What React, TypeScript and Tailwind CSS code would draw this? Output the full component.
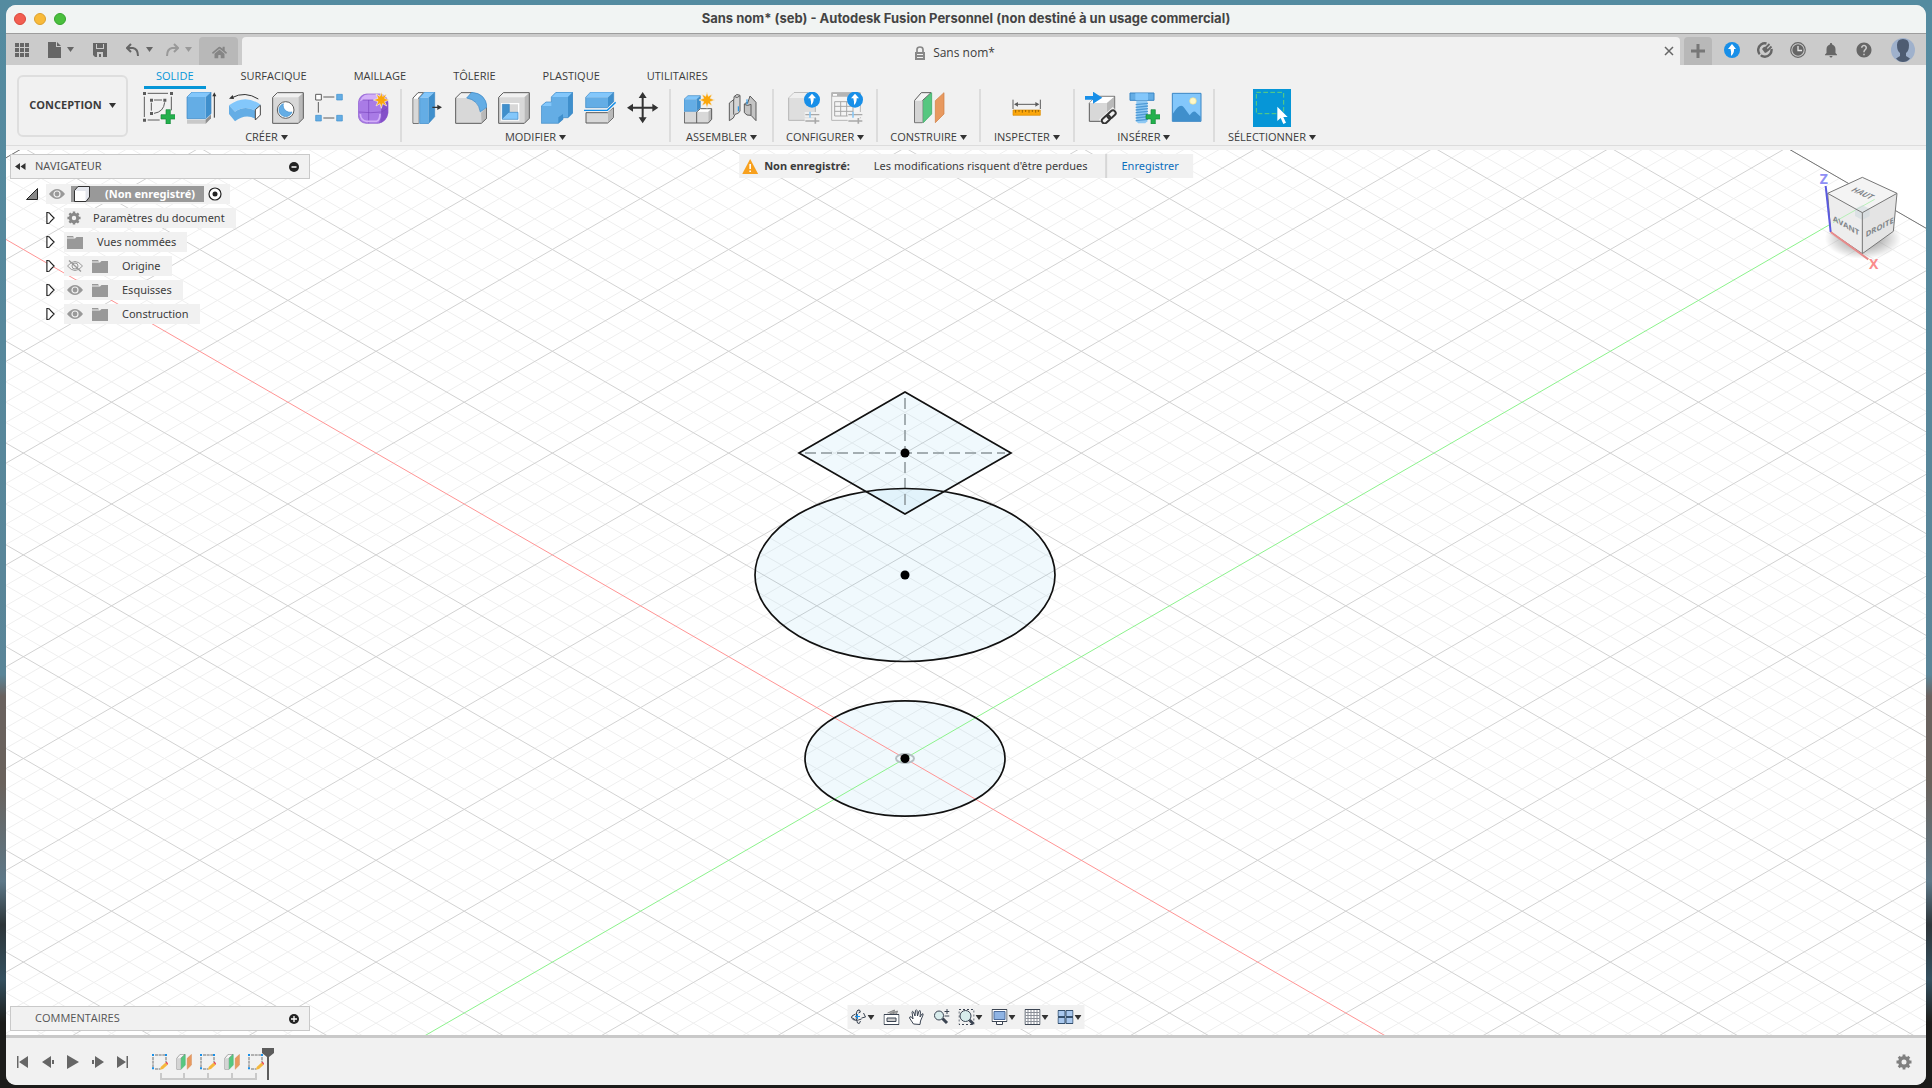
import React from 'react';
import { FaHome } from 'react-icons/fa';
import { MdNotifications, MdHelp } from 'react-icons/md';

const BLUE = '#64ade5';
const BLUE_LIGHT = '#83c7fb';
const BLUE_DARK = '#3f8fcc';
const LINE = '#5c5c5c';

interface IconProps {
  children: React.ReactNode;
  className?: string;
}

const Icon: React.FC<IconProps> = ({ children, className = 'size-8' }) => (
  <svg viewBox="0 0 96 96" className={`${className} shrink-0`} fill="none" aria-hidden="true">
    {children}
  </svg>
);

const Caret: React.FC<{ className?: string }> = ({ className = 'text-[#333]' }) => (
  <svg viewBox="0 0 7 5" className={`h-[5px] w-[7px] shrink-0 ${className}`} aria-hidden="true">
    <path d="M0 0h7L3.5 5z" fill="currentColor" />
  </svg>
);

const Gear: React.FC<{ className: string }> = ({ className }) => (
  <svg viewBox="0 0 16 16" className={`${className} shrink-0`} fill="none" stroke="currentColor" aria-hidden="true">
    <circle cx="8" cy="8" r="4.200" strokeWidth="3.400" />
    <path d="M8 .5V3M8 13v2.500M.5 8H3M13 8h2.500M2.700 2.700l1.800 1.800M11.500 11.500l1.800 1.800M2.700 13.300l1.800-1.800M11.500 4.500l1.800-1.800" strokeWidth="2.800" />
  </svg>
);

const Star: React.FC<{ x: number; y: number }> = ({ x, y }) => (
  <path
    transform={`translate(${x} ${y})`}
    d="M0-25 4-11 16-18 10-5 24 0 10 5 16 18 4 11 0 25-4 11-16 18-10 5-24 0-10-5-16-18-4-11z"
    fill="#fba60a"
    stroke="#f1f1f1"
    strokeWidth="2"
  />
);

const Plus: React.FC = () => (
  <path d="M69 53h13v15h15v13H82v15H69V81H54V68h15z" fill="#23b14d" stroke="#15873a" strokeWidth="2" />
);

const Badge: React.FC = () => (
  <>
    <circle cx="72" cy="23" r="24" fill="#188fe8" />
    <path d="M72 5 84 19H77Q78 32 69 39 70 30 67 19H60z" fill="#fff" />
  </>
);

const Sliders: React.FC = () => (
  <g strokeWidth="4">
    <path d="M50 68H94M50 87H94" stroke="#f1f1f1" strokeWidth="16" />
    <path d="M52 68H94M52 87H94" stroke="#a8a8a8" />
    <path d="M66 59V77" stroke="#8cc8f5" strokeWidth="5" />
    <path d="M82 78V95" stroke="#a8a8a8" strokeWidth="5" />
  </g>
);

const Cube: React.FC = () => (
  <g stroke={LINE} strokeWidth="3" strokeLinejoin="round">
    <path d="M2 16 16 2H94L79 16z" fill="#f1f1f1" stroke="none" />
    <path d="M79 16 94 2V79L79 94z" fill="#b9b9b9" stroke="none" />
    <path d="M2 16H79V94H2z" fill="#d8d8d8" stroke="none" />
    <path d="M2 16 16 2H94V79L79 94H2z" />
  </g>
);

const ConstructPlanes: React.FC<{ className?: string }> = ({ className }) => (
  <Icon className={className}>
    <path d="M5 25 25 2H54L28 26V92H5z" fill="#f4f4f4" stroke={LINE} strokeWidth="3" />
    <path d="M6 26H29V91H6z" fill="#d4d4d4" />
    <path d="M31 26 56 2V66L31 92z" fill="#56c780" stroke="#2fa45c" strokeWidth="2" />
    <path d="M67 26 93 2V66L67 92z" fill="#e8995f" stroke="#cf7b40" strokeWidth="2" />
  </Icon>
);

const createIcons: Record<string, React.ReactNode> = {
  'Créer une esquisse': (
    <Icon>
      <g stroke={LINE} strokeWidth="3">
        <path d="M14 4H75M4 14V75M14 84H50M85 14V55M33 24H57M25 32V56" />
        <path d="M65 31Q62 60 33 64" />
      </g>
      <path d="M0 0h9v9H0zM81 0h9v9h-9zM0 80h9v9H0zM21 20h9v9h-9zM61 20h9v9h-9zM21 60h9v9h-9z" fill={LINE} />
      <Plus />
    </Icon>
  ),
  Extrusion: (
    <Icon>
      <path d="M3 83H59L75 68V79L59 95H3z" fill="#c9c9c9" />
      <path d="M59 83 75 68V79L59 95z" fill="#8f8f8f" />
      <path d="M3 15 18 0H75L59 15z" fill={BLUE_LIGHT} />
      <path d="M59 15 75 0V65L59 80z" fill={BLUE_DARK} />
      <path d="M3 15H59V80H3z" fill={BLUE} />
      <path d="M3 15 18 0H75V65L59 80H3z" stroke="#3b86c4" strokeWidth="2" />
      <path d="M85 10V77" stroke="#333" strokeWidth="3" />
      <path d="M85 1 91 13H79z" fill="#333" />
    </Icon>
  ),
  Révolution: (
    <Icon>
      <path d="M9 17Q48-4 88 21" stroke="#333" strokeWidth="3" />
      <path d="M0 20 11 9 15 21z" fill="#333" />
      <path d="M0 40Q48 5 95 38L79 56Q48 38 18 59z" fill={BLUE_LIGHT} />
      <path d="M0 40 18 59Q48 38 79 56V80Q48 64 18 88L0 66z" fill={BLUE} />
      <path d="M79 53 94 40V69L79 84z" fill="#fff" stroke="#444" strokeWidth="3" />
    </Icon>
  ),
  Perçage: (
    <Icon>
      <Cube />
      <circle cx="41" cy="54" r="25" fill="#fff" stroke={LINE} strokeWidth="3" />
      <path d="M34 35A20 20 0 1 0 60 60 21 21 0 0 1 34 35z" fill={BLUE} stroke={BLUE_DARK} strokeWidth="2" />
    </Icon>
  ),
  Réseau: (
    <Icon>
      <path d="M25 15H58M10 30V62M25 78H58" stroke={LINE} strokeWidth="3" />
      <path d="M2 7h17v17H2z" fill="#fff" stroke={LINE} strokeWidth="3" />
      <path d="M65 7h17v17H65zM2 70h17v17H2zM65 70h17v17H65z" fill={BLUE} stroke={BLUE_DARK} strokeWidth="2" />
    </Icon>
  ),
  Forme: (
    <Icon>
      <path d="M1 32Q4 8 26 6H66Q90 12 90 34V62Q86 90 60 94H24Q2 92 1 70z" fill="#a97be6" />
      <path d="M12 16Q20 7 30 6H66L58 24H14Q5 26 2 34z" fill="#d3b0f8" />
      <path d="M71 36 90 26V64Q84 88 66 93 73 80 71 36z" fill="#8450c9" />
      <path d="M32 24V94M2 60Q40 64 70 60L90 48M14 24H58Q72 28 71 60 70 84 64 94" stroke="#7a45bd" strokeWidth="2" />
      <path d="M7 66Q8 86 26 88H56Q66 84 66 66" stroke="#d3b0f8" strokeWidth="5" />
      <path d="M1 32Q4 8 26 6H66Q90 12 90 34V62Q86 90 60 94H24Q2 92 1 70z" stroke="#8a55cc" strokeWidth="2" />
      <Star x={70} y={24} />
    </Icon>
  ),
};

const modifyIcons: Record<string, React.ReactNode> = {
  'Appuyer/Tirer': (
    <Icon>
      <path d="M3 94V18L18 2H35L20 18V94z" fill="#fff" stroke={LINE} strokeWidth="3" />
      <path d="M5 20H20V93H5z" fill="#d8d8d8" />
      <path d="M23 17 38 0H68L49 17z" fill={BLUE_LIGHT} />
      <path d="M49 17 68 0V74L49 95z" fill={BLUE_DARK} />
      <path d="M23 17H49V95H23z" fill={BLUE} />
      <path d="M23 17 38 0H68V74L49 95H23z" stroke="#3b86c4" strokeWidth="2" />
      <path d="M61 46H78" stroke="#333" strokeWidth="4" />
      <path d="M90 46 76 38V54z" fill="#333" />
    </Icon>
  ),
  Congé: (
    <Icon>
      <path d="M2 94V18L18 2H52L36 18Q70 24 76 60L94 46V79L79 94z" fill="#f1f1f1" />
      <path d="M2 94V18H34Q72 24 78 66V94z" fill="#d8d8d8" />
      <path d="M78 62 95 45V79L79 94z" fill="#b9b9b9" />
      <path d="M52 2H18L2 18V94H79L95 79V46" stroke={LINE} strokeWidth="3" />
      <path d="M35 18 50 1Q92 4 96 45L76 60Q70 24 35 18z" fill={BLUE} stroke="#3b86c4" strokeWidth="2" />
    </Icon>
  ),
  Coque: (
    <Icon>
      <Cube />
      <path d="M9 33H64V86H9z" fill="#fff" />
      <path d="M13 37H60V82H13z" fill="#d8d8d8" />
      <path d="M13 37H34V61L13 82z" fill={BLUE_DARK} />
      <path d="M13 82 34 61H60V82z" fill={BLUE_LIGHT} />
      <path d="M13 37H34V61H60V82H13z" stroke="#3b86c4" strokeWidth="2" />
    </Icon>
  ),
  Combiner: (
    <Icon>
      <path d="M1 42 15 30H31V15L45 1H95V63L81 77H66V82L52 94H1z" fill={BLUE} />
      <path d="M31 15 45 1H95L81 15zM1 42 15 30H31V42z" fill={BLUE_LIGHT} />
      <path d="M81 15 95 1V63L81 77zM52 76 66 66V82L52 94z" fill={BLUE_DARK} />
      <path d="M1 42 15 30H31V15L45 1H95V63L81 77H66V82L52 94H1z" stroke="#3b86c4" strokeWidth="2" />
    </Icon>
  ),
  Scinder: (
    <Icon>
      <path d="M5 16 20 0H89L72 16z" fill={BLUE_LIGHT} />
      <path d="M72 16 89 0V30L72 47z" fill={BLUE_DARK} />
      <path d="M5 16H72V47H5z" fill={BLUE} />
      <path d="M5 16 20 0H89V30L72 47H5z" stroke="#3b86c4" strokeWidth="2" />
      <path d="M6 62H71L88 47V77L71 93H6z" fill="#d8d8d8" stroke={LINE} strokeWidth="3" />
      <path d="M72 62 87 49V76L72 91z" fill="#b9b9b9" />
      <path d="M0 55H70L95 31" stroke="#f1f1f1" strokeWidth="10" />
      <path d="M0 55H70L95 31" stroke="#0d8ce9" strokeWidth="4" />
    </Icon>
  ),
  Déplacer: (
    <Icon>
      <path d="M47 12V82M12 47H82" stroke="#333" strokeWidth="6" />
      <path d="M47 0 59 18H35zM47 94 59 76H35zM0 47 18 35V59zM94 47 76 35V59z" fill="#333" />
    </Icon>
  ),
};

const assembleIcons: Record<string, React.ReactNode> = {
  'Nouveau composant': (
    <Icon>
      <path d="M1 59H37V93H1zM38 59H73V93H38z" fill="#d8d8d8" />
      <path d="M38 59 50 48H84L73 59z" fill="#fff" />
      <path d="M73 59 84 48V81L73 93z" fill="#b9b9b9" />
      <path d="M1 60V93H73L83 82V50H49L38 60V93" stroke={LINE} strokeWidth="3" />
      <path d="M0 22 12 11H49L37 22z" fill={BLUE_LIGHT} />
      <path d="M37 22 49 11V47L37 58z" fill={BLUE_DARK} />
      <path d="M0 22H37V58H0z" fill={BLUE} />
      <path d="M0 22 12 11H49V47L37 58H0z" stroke="#3b86c4" strokeWidth="2" />
      <Star x={69} y={24} />
    </Icon>
  ),
  Liaison: (
    <Icon>
      <g stroke={LINE} strokeWidth="3" strokeLinejoin="round">
        <path d="M7 86V33L21 22V14Q29 3 39 10V58Q34 66 24 67L19 78z" fill="#d4d4d4" />
        <path d="M20 22V68M23 14Q30 20 38 12" />
        <path d="M52 36Q58 30 62 33L69 12 87 31V86L72 70Q58 72 52 62z" fill="#c4c4c4" />
        <path d="M52 37Q61 44 72 37V70" />
      </g>
      <path d="M34 43V58M60 22V37" stroke="#0d8ce9" strokeWidth="3" />
    </Icon>
  ),
};

const configureIcons: Record<string, React.ReactNode> = {
  Configurer: (
    <Icon>
      <path d="M2 85V18L18 2H60L82 46V85z" fill="#dedede" stroke="#b5b5b5" strokeWidth="3" />
      <path d="M3 18 18 3H60L50 18z" fill="#efefef" />
      <Sliders />
      <Badge />
    </Icon>
  ),
  'Tableau de configuration': (
    <Icon>
      <path d="M2 2H88V85H2z" fill="#f4f4f4" stroke="#b5b5b5" strokeWidth="3" />
      <path d="M2 2H88V14H2z" fill="#b5b5b5" />
      <path d="M6 6H18V11H6z" fill="#fff" />
      <path d="M11 29H66V72H11zM11 43H66M11 58H66M29 29V72M47 29V72" stroke="#a8a8a8" strokeWidth="3" />
      <Sliders />
      <Badge />
    </Icon>
  ),
};

const inspectIcons: Record<string, React.ReactNode> = {
  Mesurer: (
    <Icon>
      <path d="M6 23V51M88 23V51M14 37H80" stroke={LINE} strokeWidth="3" />
      <path d="M9 37 21 30V44zM85 37 73 30V44z" fill={LINE} />
      <path d="M6 54H88V70H6z" fill="#fba60a" stroke="#d98b00" strokeWidth="2" />
      <path d="M14 54V62M24 54V60M34 54V62M44 54V60M54 54V62M64 54V60M74 54V62M82 54V60" stroke="#6b4600" strokeWidth="2" />
    </Icon>
  ),
};

const insertIcons: Record<string, React.ReactNode> = {
  'Insérer dérivée': (
    <Icon>
      <path d="M13 34 32 13H89V64L67 88H13z" fill="#d8d8d8" stroke={LINE} strokeWidth="3" />
      <path d="M14 33 32 14H88L66 33z" fill="#fff" />
      <path d="M66 33 88 14V64L66 86z" fill="#b9b9b9" />
      <path d="M0 12H24V-1L52 17 24 35V23H0z" fill="#188fe8" />
      <g transform="translate(72 74) rotate(-42)">
        <path d="M-26-12H26V12H-26z" stroke="#f1f1f1" strokeWidth="4" fill="#f1f1f1" />
        <rect x="-26" y="-8" width="28" height="16" rx="8" stroke="#333" strokeWidth="6" />
        <rect x="-4" y="-8" width="28" height="16" rx="8" stroke="#333" strokeWidth="6" />
      </g>
    </Icon>
  ),
  'Insérer une fixation': (
    <Icon>
      <path d="M6 3H78V25H6z" fill={BLUE} stroke="#3b86c4" strokeWidth="3" />
      <path d="M22 4H60V24H22z" fill={BLUE_LIGHT} />
      <path d="M25 26H58V88L52 94H30L25 88z" fill="#8fc9f4" />
      <path d="M23 38 60 34M23 46 60 42M23 54 60 50M23 62 60 58M23 70 60 66M23 78 60 74M23 86 60 82" stroke="#4f9ad6" strokeWidth="4" />
      <Plus />
    </Icon>
  ),
  'Insérer une image': (
    <Icon>
      <path d="M4 4H90V88H4z" fill={BLUE_LIGHT} stroke="#3b86c4" strokeWidth="3" />
      <path d="M5 66Q28 28 40 48L56 70Q68 52 76 62L89 74V87H5z" fill={BLUE_DARK} />
      <circle cx="66" cy="27" r="10" fill="#fff8c8" stroke="#e8dd90" strokeWidth="2" />
    </Icon>
  ),
};

const selectIcons: Record<string, React.ReactNode> = {
  Sélectionner: (
    <svg viewBox="0 0 114 114" className="size-[38px] bg-[#0696d7]" fill="none" aria-hidden="true">
      <path d="M10 10H92V74H10z" stroke="#5fd07a" strokeWidth="3" strokeDasharray="14 7" />
      <path d="M73 53V96L83 87 91 105 99 101 91 84H104z" fill="#fff" />
    </svg>
  ),
};

interface ToolGroup {
  label: string;
  icons: Record<string, React.ReactNode>;
  padding: string;
}

const groups: ToolGroup[] = [
  { label: 'CRÉER', icons: createIcons, padding: 'pl-[15px] pr-[10px]' },
  { label: 'MODIFIER', icons: modifyIcons, padding: 'px-[10px]' },
  { label: 'ASSEMBLER', icons: assembleIcons, padding: 'px-[13px]' },
  { label: 'CONFIGURER', icons: configureIcons, padding: 'px-[12px]' },
  {
    label: 'CONSTRUIRE',
    icons: { 'Plan de décalage': <ConstructPlanes /> },
    padding: 'px-[12px]',
  },
  { label: 'INSPECTER', icons: inspectIcons, padding: 'px-[13px]' },
  { label: 'INSÉRER', icons: insertIcons, padding: 'px-[10px]' },
  { label: 'SÉLECTIONNER', icons: selectIcons, padding: 'px-[13px]' },
];

const workspaceTabs = ['SOLIDE', 'SURFACIQUE', 'MAILLAGE', 'TÔLERIE', 'PLASTIQUE', 'UTILITAIRES'];

const TitleBar: React.FC = () => (
  <header className="relative flex h-[29px] items-center justify-center border-b border-[#9d9d9d] bg-[#f1f4f3]">
    <div className="absolute left-2 flex gap-2">
      <button type="button" aria-label="Fermer" className="size-3 rounded-full border border-[#d9483b] bg-[#f25e51]" />
      <button type="button" aria-label="Réduire" className="size-3 rounded-full border border-[#dba02e] bg-[#f8ba39]" />
      <button type="button" aria-label="Agrandir" className="size-3 rounded-full border border-[#36a32e] bg-[#4abf3d]" />
    </div>
    <h1 className="font-[Inter,sans-serif] text-[13px] font-bold text-[#444]">
      Sans nom* (seb) - Autodesk Fusion Personnel (non destiné à un usage commercial)
    </h1>
  </header>
);

const TabStrip: React.FC = () => (
  <div className="flex h-[31px] items-end bg-[#cbcbcb] text-[#666]">
    <div className="flex h-[31px] w-[193px] items-center pl-[9px]">
      <button type="button" aria-label="Données">
        <svg viewBox="0 0 14 14" className="size-[14px]" fill="currentColor">
          <path d="M0 0h4v4H0zM5 0h4v4H5zM10 0h4v4h-4zM0 5h4v4H0zM5 5h4v4H5zM10 5h4v4h-4zM0 10h4v4H0zM5 10h4v4H5zM10 10h4v4h-4z" />
        </svg>
      </button>
      <button type="button" aria-label="Fichier" className="ml-[19px] flex items-center gap-[6px]">
        <svg viewBox="0 0 13 16" className="h-4 w-[13px]" fill="currentColor">
          <path d="M0 0h8v5h5v11H0zM9 0l4 4H9z" />
        </svg>
        <Caret className="text-[#666]" />
      </button>
      <button type="button" aria-label="Sauvegarder" className="ml-[19px]">
        <svg viewBox="0 0 14 14" className="size-[14px]" fill="currentColor">
          <path fillRule="evenodd" d="M0 0h14v14H2L0 12zM3 1v5h8V1h-1v4H4V1zM4 9v5h2v-3h2v3h2V9z" />
        </svg>
      </button>
      <button type="button" aria-label="Annuler" className="ml-[19px] flex items-center gap-[7px]">
        <svg viewBox="0 0 13 13" className="size-[13px]" fill="none" stroke="currentColor" strokeWidth="2">
          <path d="M5 1 1 5l4 4M1.500 5H7q5 1 5 8" />
        </svg>
        <Caret className="text-[#666]" />
      </button>
      <button type="button" aria-label="Rétablir" className="ml-[13px] flex items-center gap-[6px] text-[#999]">
        <svg viewBox="0 0 13 13" className="size-[13px]" fill="none" stroke="currentColor" strokeWidth="2">
          <path d="m8 1 4 4-4 4M11.500 5H6q-5 1-5 8" />
        </svg>
        <Caret className="text-[#999]" />
      </button>
    </div>
    <button type="button" aria-label="Accueil" className="flex h-7 w-[39px] items-center justify-center rounded-t bg-[#b8b8b8] pt-[3px] pl-[2px] text-[#858585]">
      <FaHome size={15} />
    </button>
    <div className="ml-1 flex h-7 flex-1 items-center rounded-t bg-[#f1f1f1] pr-[6px]">
      <div className="flex flex-1 items-center justify-center gap-[7px] pt-[3px] pl-[3px]">
        <svg viewBox="0 0 12 14" className="h-[14px] w-3" aria-hidden="true">
          <path d="M3 6V3.500Q3 1 6 1T9 3.500V6" fill="none" stroke="#888" strokeWidth="1.700" />
          <path d="M1 6h10v8H1z" fill="#888" />
          <path d="M3 8.500h6M3 11.500h6" stroke="#f1f1f1" />
        </svg>
        <span className="text-xs text-[#3c3c3c]">Sans nom*</span>
      </div>
      <button type="button" aria-label="Fermer l'onglet">
        <svg viewBox="0 0 10 10" className="size-[10px]" stroke="#666" strokeWidth="1.500">
          <path d="m1 1 8 8M9 1 1 9" />
        </svg>
      </button>
    </div>
    <button type="button" aria-label="Nouveau" className="ml-1 flex h-7 w-7 items-center justify-center rounded-t bg-[#b8b8b8]">
      <svg viewBox="0 0 14 14" className="size-[14px]" stroke="#777" strokeWidth="3">
        <path d="M7 0v14M0 7h14" />
      </svg>
    </button>
    <div className="flex h-[31px] items-center gap-[17px] pr-[11px] pl-3">
      <button type="button" aria-label="Mises à jour">
        <svg viewBox="0 0 16 16" className="size-4">
          <circle cx="8" cy="8" r="8" fill="#188fe8" />
          <path d="M8 2 12 7H10Q10.500 11 7 14 7.500 10 6.500 7H4z" fill="#fff" />
        </svg>
      </button>
      <button type="button" aria-label="Extensions">
        <svg viewBox="0 0 16 16" className="size-4" fill="none">
          <path d="M9.500 1.500A6.700 6.700 0 1 0 14.500 7" stroke="currentColor" strokeWidth="2.400" />
          <path d="M1.500 14.500 7 9" stroke="#cbcbcb" strokeWidth="1.500" />
          <path d="M5 7Q7 4 9 5L11.500 8Q11 10.500 8 11z" fill="currentColor" />
          <path d="m8.500 6 4-4M10.500 8.500l4-4" stroke="currentColor" strokeWidth="1.800" />
        </svg>
      </button>
      <button type="button" aria-label="État des tâches">
        <svg viewBox="0 0 16 16" className="size-4">
          <circle cx="8" cy="8" r="7.300" fill="none" stroke="currentColor" strokeWidth="1.200" />
          <circle cx="8" cy="8" r="5.700" fill="currentColor" />
          <path d="M8 4v4.500h4" fill="none" stroke="#e6e6e6" strokeWidth="1.300" />
        </svg>
      </button>
      <button type="button" aria-label="Notifications">
        <MdNotifications size={18} className="-mx-px" />
      </button>
      <button type="button" aria-label="Aide">
        <MdHelp size={18} className="-mx-px" />
      </button>
      <button type="button" aria-label="Profil" className="ml-[2px]">
        <svg viewBox="0 0 24 24" className="size-6">
          <circle cx="12" cy="12" r="12" fill="#9fb1cc" />
          <path d="M12 1Q18 1 18 7 18 13 15 15V18L19 20.500Q16 24 12 24T5 20.500L9 18V15Q6 13 6 7 6 1 12 1z" fill="#4e5c72" />
        </svg>
      </button>
    </div>
  </div>
);

const Ribbon: React.FC = () => (
  <div className="flex h-[85px] items-start border-b border-[#f1f1f1] bg-[#f1f1f1] text-[11px] text-[#3c3c3c] shadow-[inset_0_-3px_0_#f1f1f1,inset_0_-4px_0_#dcdcdc]">
    <button
      type="button"
      className="mt-[10px] ml-[11px] flex h-[62px] w-[111px] items-center justify-center gap-[7px] rounded-md border-2 border-[#dedede] pb-[2px] font-bold"
    >
      CONCEPTION <Caret />
    </button>
    <div>
      <nav className="flex h-6 gap-[23px] pl-4">
        {workspaceTabs.map((tab) => (
          <a
            key={tab}
            href="#"
            className={
              tab === 'SOLIDE'
                ? 'border-b-3 border-[#0696d7] px-3 leading-[22px] text-[#0696d7]'
                : 'px-3 leading-[22px]'
            }
          >
            {tab}
          </a>
        ))}
      </nav>
      <div className="flex divide-x-2 divide-[#dcdcdc]">
        {groups.map((group) => (
          <div key={group.label} className={`flex h-[53px] flex-col items-center ${group.padding}`}>
            <div className="flex h-[38px] shrink-0 items-center gap-[11px]">
              {Object.entries(group.icons).map(([name, icon]) => (
                <button key={name} type="button" aria-label={name}>
                  {icon}
                </button>
              ))}
            </div>
            <button type="button" className="flex shrink-0 items-center gap-[3px] leading-5">
              {group.label} <Caret />
            </button>
          </div>
        ))}
      </div>
    </div>
  </div>
);

// Isometric grid: origin of the model in drawing units and half-height of a major cell
const OX = 905;
const OY = 758.5;
const SLOPE = 0.57735;
const STEP = 101.8;

const lineAt = (k: number, dir: 1 | -1) => {
  const c = OY + k * STEP;
  return `M-400 ${c + dir * SLOPE * (-400 - OX)}L2400 ${c + dir * SLOPE * (2400 - OX)}`;
};

const minorPath: string[] = [];
const majorPath: string[] = [];
for (let i = -55; i <= 65; i++) {
  if (i === 0) continue;
  const target = i % 5 === 0 ? majorPath : minorPath;
  target.push(lineAt(i / 5, 1), lineAt(i / 5, -1));
}

const Scene: React.FC = () => (
  <svg
    viewBox="6 150 1920 885"
    preserveAspectRatio="xMidYMid slice"
    className="absolute inset-0 size-full"
    fill="none"
    aria-hidden="true"
  >
    <clipPath id="plane">
      <path d={`M${OX} ${OY - 11 * STEP - 1}L3000 ${OY - 11 * STEP - 1 + SLOPE * 2095}V2000H-1200V${OY - 11 * STEP - 1 + SLOPE * 2105}z`} />
    </clipPath>
    <g clipPath="url(#plane)">
      <path d={minorPath.join('')} stroke="#efefef" />
      <path d={majorPath.join('')} stroke="#d2d2d2" />
      <path d={lineAt(-11, 1) + lineAt(-11, -1)} stroke="#777" />
    </g>
    <g fill="#2aa3e0" fillOpacity="0.07" stroke="none">
      <path d="M905 392 1011 453 905 514 799 453z" />
      <ellipse cx="905" cy="575" rx="150" ry="86.500" />
      <ellipse cx="905" cy="758.500" rx="100" ry="57.700" />
    </g>
    <path d={lineAt(0, 1)} stroke="#ff9494" />
    <path d={`M-400 ${OY + SLOPE * 1305}L1830 ${OY - SLOPE * 925}`} stroke="#8cf28c" />
    <path d="M905 398V508M805 453H1005" stroke="#8b9599" strokeWidth="1.500" strokeDasharray="11 5" />
    <g stroke="#111" strokeWidth="1.700">
      <path d="M905 392 1011 453 905 514 799 453z" />
      <ellipse cx="905" cy="575" rx="150" ry="86.500" />
      <ellipse cx="905" cy="758.500" rx="100" ry="57.700" />
    </g>
    <ellipse cx="905" cy="758.500" rx="9" ry="4.500" stroke="#b5bfc3" strokeWidth="2" />
    <g fill="#000">
      <circle cx="905" cy="453" r="4.500" />
      <circle cx="905" cy="575" r="4.500" />
      <circle cx="905" cy="758.500" r="4.500" />
    </g>
  </svg>
);

const ViewCube: React.FC = () => (
  <svg viewBox="0 0 300 330" className="absolute top-5 right-[13px] h-[110px] w-[100px]" role="img" aria-label="Cube de vue">
    <defs>
      <radialGradient id="shade">
        <stop offset="0.400" stopColor="#000" stopOpacity="0.300" />
        <stop offset="1" stopColor="#000" stopOpacity="0" />
      </radialGradient>
    </defs>
    <ellipse cx="150" cy="205" rx="115" ry="62" fill="url(#shade)" />
    <path d="M148 22 252 70 148 128 44 70z" fill="#f4f4f4" />
    <path d="M44 70 148 128V251L53 186z" fill="#ededed" />
    <path d="M148 128 252 70 241 184 148 251z" fill="#e4e4e4" />
    <path d="M60 158 185 88" stroke="#9af09a" strokeWidth="2" />
    <path d="M126 116 148 106 170 116V138L148 150 126 138z" fill="#cfd8de" fillOpacity="0.600" />
    <path d="M148 22 252 70 148 128 44 70zM44 70 53 186 148 251 241 184 252 70M148 128V251" fill="none" stroke="#777" strokeWidth="3" />
    <path d="M38 48 53 186" stroke="#5a5ae0" strokeWidth="6" />
    <path d="M53 186 166 268" stroke="#e88a8a" strokeWidth="6" />
    <g fill="#7f8489" fontFamily="Open Sans, sans-serif" fontWeight="700" fontSize="23">
      <text transform="translate(60 152) skewY(30)">AVANT</text>
      <text transform="translate(158 202) skewY(-28)">DROITE</text>
      <text transform="translate(112 62) rotate(24) skewX(-34)">HAUT</text>
    </g>
    <g fontFamily="Open Sans, sans-serif" fontSize="42" fontWeight="700">
      <text x="20" y="42" fill="#8f8ff5">Z</text>
      <text x="168" y="296" fill="#fa8c8c">X</text>
    </g>
  </svg>
);

const Eye: React.FC<{ off?: boolean }> = ({ off }) => (
  <svg viewBox="0 0 16 12" className="h-3 w-4 shrink-0" aria-hidden="true">
    {off ? (
      <g fill="none" stroke="#999">
        <path d="M.5 6Q8-3 15.500 6 8 15 .5 6z" />
        <circle cx="8" cy="6" r="3" />
        <path d="M2 0.500 14 11.500" strokeWidth="1.300" />
      </g>
    ) : (
      <>
        <path d="M0 6Q8-4 16 6 8 16 0 6z" fill="#999" />
        <circle cx="8" cy="6" r="3" fill="#999" stroke="#f1f1f1" strokeWidth="1.200" />
      </>
    )}
  </svg>
);

const Folder: React.FC = () => (
  <svg viewBox="0 0 16 13" className="h-[13px] w-4 shrink-0" fill="#999" aria-hidden="true">
    <path d="M0 0h6l1 1.500H0zM0 2.500h8L9.500 1H16v12H0z" />
  </svg>
);

const Expander: React.FC = () => (
  <button type="button" aria-label="Développer" className="flex w-[9px] shrink-0">
    <svg viewBox="0 0 10 14" className="h-[14px] w-[10px]" fill="#fff" stroke="#222" strokeWidth="1.300">
      <path d="M1 1Q4 .5 5 3L9 7 5 11Q4 13.500 1 13z" />
    </svg>
  </button>
);

interface BrowserNode {
  label: string;
  icon: 'gear' | 'folder';
  visible?: boolean;
  gap: string;
}

const browserNodes: BrowserNode[] = [
  { label: 'Paramètres du document', icon: 'gear', gap: 'gap-3' },
  { label: 'Vues nommées', icon: 'folder', gap: 'gap-[14px]' },
  { label: 'Origine', icon: 'folder', visible: false, gap: 'gap-[14px]' },
  { label: 'Esquisses', icon: 'folder', visible: true, gap: 'gap-[14px]' },
  { label: 'Construction', icon: 'folder', visible: true, gap: 'gap-[14px]' },
];

const Browser: React.FC = () => (
  <aside className="flex flex-col items-start font-['Noto_Sans',sans-serif] text-[11px] text-[#3c3c3c]">
    <div className="flex h-[25px] w-[300px] items-center border border-[#c9c9c9] bg-[#f1f1f1] pr-[10px] pl-1 text-[#555]">
      <button type="button" aria-label="Réduire le navigateur">
        <svg viewBox="0 0 11 7" className="h-[7px] w-[11px]" fill="#333">
          <path d="M5 0v7L0 3.500zM10.500 0v7l-5-3.500z" />
        </svg>
      </button>
      <h2 className="ml-[9px] flex-1">NAVIGATEUR</h2>
      <button type="button" aria-label="Masquer">
        <svg viewBox="0 0 10 10" className="size-[10px]">
          <circle cx="5" cy="5" r="5" fill="#222" />
          <path d="M2.500 5h5" stroke="#fff" strokeWidth="1.500" />
        </svg>
      </button>
    </div>
    <div className="mt-[5px] flex items-center gap-2 pl-4">
      <button type="button" aria-label="Réduire la racine">
        <svg viewBox="0 0 12 12" className="size-3">
          <path d="M11.500.5v11H.5z" fill="#888" stroke="#222" />
        </svg>
      </button>
      <div className="flex h-5 items-center bg-[#f1f1f1] pr-2 pl-[3px]">
        <Eye />
        <div className="ml-[6px] flex h-4 items-center gap-[15px] bg-[#999] pr-[9px] pl-[3px] font-bold text-white">
          <svg viewBox="0 0 16 16" className="size-4" stroke="#333" strokeLinejoin="round">
            <path d="M.5 4.500 4 .5h11.500V11L12 15.500H.5z" fill="#e4e6ec" />
            <path d="M1 5h10.500v10H1z" fill="#fff" stroke="none" />
          </svg>
          (Non enregistré)
        </div>
        <button type="button" aria-label="Activer le composant" className="ml-1">
          <svg viewBox="0 0 14 14" className="size-[14px]">
            <circle cx="7" cy="7" r="6" fill="#fff" stroke="#222" strokeWidth="1.200" />
            <circle cx="7" cy="7" r="2.500" fill="#222" />
          </svg>
        </button>
      </div>
    </div>
    <ul className="mt-1 flex flex-col items-start gap-1 pl-9">
      {browserNodes.map((node) => (
        <li key={node.label} className="flex items-center gap-[9px]">
          <Expander />
          <div className={`flex h-5 items-center bg-[#f1f1f1] pr-[11px] pl-[3px] ${node.gap}`}>
            <div className="flex items-center gap-[9px]">
              {node.visible !== undefined && <Eye off={!node.visible} />}
              {node.icon === 'gear' ? <Gear className="size-[14px] text-[#888]" /> : <Folder />}
            </div>
            {node.label}
          </div>
        </li>
      ))}
    </ul>
  </aside>
);

const UnsavedWarning: React.FC = () => (
  <div className="absolute top-1 left-1/2 flex h-6 -translate-x-1/2 items-center bg-[#f1f1f1] font-['Noto_Sans',sans-serif] text-[11px] whitespace-nowrap text-[#3c3c3c]">
    <svg viewBox="0 0 16 15" className="ml-[3px] h-[15px] w-4" aria-hidden="true">
      <path d="M8 0 16 15H0z" fill="#f7a01d" />
      <path d="M8 5v5M8 11.500v1.500" stroke="#fff" strokeWidth="1.600" />
    </svg>
    <strong className="ml-[6px]">Non enregistré:</strong>
    <span className="mr-[18px] ml-6">Les modifications risquent d'être perdues</span>
    <a href="#" className="flex h-6 items-center border-l-2 border-[#d6d6d6] px-[14px] text-[#0a6ebd]">
      Enregistrer
    </a>
  </div>
);

const NAV = '#3b4452';

const viewTools: { name: string; menu: boolean; icon: React.ReactNode }[] = [
  {
    name: 'Orbite',
    menu: true,
    icon: (
      <g fill="none" stroke={NAV}>
        <path d="M10 2Q7-1 6 4 5 10 7 14 9 16 10 12M5 5Q0 7 1 9 4 13 11 10" />
        <path d="M8 1 10 3 8 4M13 4 15 8 11 9M5 11 2 9" />
        <path d="M7 5v5M4.500 7.500h5" stroke="#188fe8" />
      </g>
    ),
  },
  {
    name: 'Regarder',
    menu: false,
    icon: (
      <g fill="#fff" stroke={NAV}>
        <path d="M4 4 11 1 10 5M6 5 14 2 13 5" fill="#aaa" stroke="#888" />
        <path d="M.5 5.500h15v10H.5z" />
        <path d="M3.500 9h9v3.500h-9z" fill="#ccc" />
      </g>
    ),
  },
  {
    name: 'Panoramique',
    menu: false,
    icon: (
      <path
        d="M5 15 1 9Q1 7 3 8L4.500 10 3.500 3Q4 1.500 5 3L6.500 7 7 1.500Q8 0 8.500 1.500L9 7 10.500 2Q12 1 12 2.500L11.500 8 13.500 5Q15 4 14.500 6L12 12 11.500 15.500z"
        fill="#fff"
        stroke={NAV}
      />
    ),
  },
  {
    name: 'Zoom',
    menu: false,
    icon: (
      <g fill="#d8ecec" stroke={NAV}>
        <path d="M9 9.500 13.500 14" strokeWidth="3" />
        <circle cx="5.500" cy="6.500" r="4.500" />
        <path d="M13.500 0v5M11 2.500h5M11 7h5" />
      </g>
    ),
  },
  {
    name: 'Ajuster',
    menu: true,
    icon: (
      <g fill="#d8ecec" stroke={NAV}>
        <path d="M.5.5h15v15H.5z" fill="none" strokeDasharray="2 2" />
        <path d="m11 11 4 4" strokeWidth="3" />
        <circle cx="7" cy="7" r="5.500" />
      </g>
    ),
  },
  {
    name: "Paramètres d'affichage",
    menu: true,
    icon: (
      <g fill="#fff" stroke={NAV}>
        <path d="M.5.5h15v12H.5z" />
        <path d="M2.500 2.500h11v8h-11z" fill="#8fb4e4" stroke="#4a6a9a" />
        <path d="M5 13v2.500h6V13" />
      </g>
    ),
  },
  {
    name: 'Grille et accrochages',
    menu: true,
    icon: (
      <g fill="#fff" stroke={NAV}>
        <path d="M.5.500h15v15H.5z" />
        <path d="M3.500 1v14M6.500 1v14M9.500 1v14M12.500 1v14M1 3.500h14M1 6.500h14M1 9.500h14M1 12.500h14" stroke="#8a8f98" />
      </g>
    ),
  },
  {
    name: 'Fenêtres',
    menu: true,
    icon: (
      <g fill="#a9c8ee" stroke="#34506e">
        <path d="M.5 1.500h7v6h-7zM8.500 1.500h7v6h-7zM.5 8.500h7v6h-7zM8.500 8.500h7v6h-7z" />
      </g>
    ),
  },
];

const ViewToolbar: React.FC = () => (
  <div className="absolute bottom-[6px] left-1/2 flex h-6 -translate-x-1/2 items-center gap-[9px] bg-[#f1f1f1] px-[3px]">
    {viewTools.map((tool) => (
      <button key={tool.name} type="button" aria-label={tool.name} className="flex items-center gap-px">
        <svg viewBox="0 0 16 16" className="size-4">
          {tool.icon}
        </svg>
        {tool.menu && <Caret />}
      </button>
    ))}
  </div>
);

const playback: { name: string; d: string }[] = [
  { name: 'Début', d: 'M0 1h1.500v12H0zM11 1v12L2 7z' },
  { name: 'Précédent', d: 'M9 1v12L0 7zM10 5h2v4h-2z' },
  { name: 'Lecture', d: 'M0 0 12 7 0 14z' },
  { name: 'Suivant', d: 'M0 5h2v4H0zM3 1v12l9-6z' },
  { name: 'Fin', d: 'M0 1v12l9-6zM9.500 1H11v12H9.500z' },
];

const SketchFeature: React.FC = () => (
  <Icon className="size-4">
    <path d="M18 6H80M6 18V80M18 90H50M84 18V50" stroke="#555" strokeWidth="5" strokeDasharray="18 4" />
    <path d="M0 0h12v12H0zM78 0h12v12H78zM0 80h12v12H0z" fill="#188fe8" />
    <path d="M48 94 52 78 80 52 94 64 66 90z" fill="#f5b83d" />
    <path d="M80 52 88 46 98 58 94 64z" fill="#e8404e" />
  </Icon>
);

const Timeline: React.FC = () => (
  <footer className="flex h-[50px] items-center justify-between border-t-3 border-[#c9c9c9] bg-[#f1f1f1] pr-[14px] pl-[11px]">
    <div className="flex items-center">
      <div className="flex w-[135px] items-center gap-[13px] text-[#666]">
        {playback.map((item) => (
          <button key={item.name} type="button" aria-label={item.name}>
            <svg viewBox="0 0 12 14" className="h-[14px] w-3" fill="currentColor">
              <path d={item.d} />
            </svg>
          </button>
        ))}
      </div>
      <div className="relative flex h-9 gap-2 pt-[10px]">
        {[0, 1, 2, 3, 4].map((i) => (
          <button key={i} type="button" aria-label={i % 2 === 0 ? 'Esquisse' : 'Plan'} className="flex h-4">
            {i % 2 === 0 ? <SketchFeature /> : <ConstructPlanes className="size-4" />}
          </button>
        ))}
        <svg viewBox="0 0 124 36" className="absolute top-0 left-0 h-9 w-[124px]" fill="none" aria-hidden="true">
          <path d="M9 29V35H104V29M32 29V35M56 29V35M80 29V35" stroke="#c9c9c9" strokeWidth="2" />
          <path d="M110 4h12v5l-5 4v23h-2V13l-5-4z" fill="#5c5c5c" />
        </svg>
      </div>
    </div>
    <button type="button" aria-label="Préférences de la barre de navigation" className="text-[#808080]">
      <Gear className="size-4" />
    </button>
  </footer>
);

export default function App() {
  return (
    <div className="h-screen bg-[#1c1d1b] bg-[linear-gradient(180deg,#548ba0,#5a8598_62%,#6a625f_64%,#6a625c_72%,#5d7888_81%,#2e363a_85%,#34505f_90%,#1c1c1a_94%)] px-[6px] pt-[5px] pb-[3px] font-['Open_Sans',sans-serif]">
      <div className="flex h-full flex-col overflow-hidden rounded-[10px] bg-[#f1f1f1]">
        <TitleBar />
        <TabStrip />
        <Ribbon />
        <main className="relative flex flex-1 flex-col justify-between overflow-hidden bg-white p-1">
          <Scene />
          <div className="relative">
            <Browser />
          </div>
          <UnsavedWarning />
          <ViewCube />
          <div className="relative flex h-[25px] w-[300px] items-center justify-between border border-[#c9c9c9] bg-[#f1f1f1] pr-[10px] pl-6 text-[11px] text-[#555]">
            <h2>COMMENTAIRES</h2>
            <button type="button" aria-label="Afficher les commentaires">
              <svg viewBox="0 0 10 10" className="size-[10px]">
                <circle cx="5" cy="5" r="5" fill="#222" />
                <path d="M2 5h6M5 2v6" stroke="#fff" strokeWidth="1.300" />
              </svg>
            </button>
          </div>
          <ViewToolbar />
        </main>
        <Timeline />
      </div>
    </div>
  );
}
